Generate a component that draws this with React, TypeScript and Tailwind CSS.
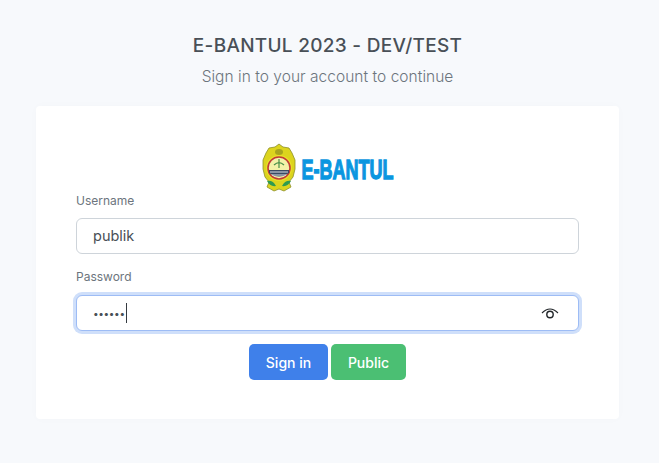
export default function App() {
  return (
    <div className="h-[463px] w-[659px] overflow-hidden bg-[#f7f9fc] font-['Inter','Noto_Sans',sans-serif]">
      <div className="flex w-[655px] flex-col items-center pt-[34px]">
        <h1 className="h-[24px] text-[19px] leading-[24px] font-[450] tracking-[0.28px] text-[#495057]">E-BANTUL 2023 - DEV/TEST</h1>
        <p className="mt-[7px] h-[24px] text-[15.5px] leading-[24px] font-light tracking-[0.03px] text-[#6c757d]">Sign in to your account to continue</p>
      </div>
      <div className="mx-[36px] mt-[17px] h-[313px] w-[583px] rounded-[4px] bg-white px-[40px] pt-[37px] shadow-[0_0_10px_rgba(33,37,41,0.02)]">
        <div className="flex h-[49px] items-center justify-center gap-[5px] pl-[2px]">
          <svg width="34" height="49" viewBox="0 0 34 49">
            <path d="M17 1 L21 4 L27 5 L30 10 L33 17 L33 26 L31 34 L27 39 L29 44 L22 48 L17 46 L12 48 L5 44 L7 39 L3 34 L1 26 L1 17 L4 10 L7 5 L13 4 Z" fill="#dcd41e" stroke="#8d8f2a" strokeWidth="0.8" />
            <ellipse cx="17" cy="9" rx="4" ry="3" fill="#a8a51e" />
            <circle cx="17" cy="25" r="13" fill="#e8e02a" />
            <circle cx="17" cy="25" r="11" fill="#f4f2a8" stroke="#c23a36" strokeWidth="1.6" />
            <path d="M17 16 V25 M12 22 Q17 17 22 22" stroke="#4a8f4a" strokeWidth="1.2" fill="none" />
            <path d="M7 27 H27 V30 Q17 37 7 30 Z" fill="#3a4a63" />
            <path d="M8 29 H26 M10 32 H24" stroke="#d8dde6" strokeWidth="1" />
            <path d="M5 38 Q11 37 14 43 Q8 44 5 38 Z M29 38 Q23 37 20 43 Q26 44 29 38 Z" fill="#2f9b50" />
          </svg>
          <svg width="95" height="28" viewBox="0 0 95 28" className="overflow-visible">
            <text x="0.5" y="16.9" transform="scale(1,1.45)" textLength="92" lengthAdjust="spacingAndGlyphs" fontFamily="'Liberation Sans',sans-serif" fontWeight="700" fontSize="19" fill="#0a96e0" stroke="#0a96e0" strokeWidth="0.9">E-BANTUL</text>
          </svg>
        </div>
        <label className="block h-[18px] text-[12px] leading-[18px] text-[#6c757d]">Username</label>
        <div className="mt-[8px] flex h-[36px] items-center rounded-[6px] border border-[#ced4da] bg-white pl-[16px] text-[14.5px] text-[#495057]">publik</div>
        <label className="mt-[14px] block h-[18px] text-[12px] leading-[18px] text-[#6c757d]">Password</label>
        <div className="mt-[9px] flex h-[36px] items-center justify-between rounded-[6px] border border-[#9dbcf5] bg-white pr-[19px] pl-[16px] text-[#495057] shadow-[0_0_0_3px_#cfdffa]">
          <div className="flex items-center">
            <span className="text-[10px] leading-none tracking-[-0.35px]">••••••</span>
            <span className="ml-[1px] h-[20px] w-px bg-[#343a40]" />
          </div>
          <svg width="18" height="12" viewBox="0 0 18 12" fill="none" stroke="#212529" strokeWidth="1.1">
            <path d="M1 6 Q9 -2 17 6" />
            <circle cx="9" cy="7.5" r="3.2" strokeWidth="1.4" />
          </svg>
        </div>
        <div className="mt-[13px] flex justify-center gap-[3px]">
          <button className="h-[36px] w-[79px] rounded-[5px] bg-[#3f80ea] text-[14px] font-[450] text-white">Sign in</button>
          <button className="h-[36px] w-[75px] rounded-[5px] bg-[#4bbf73] text-[14px] font-[450] text-white">Public</button>
        </div>
      </div>
    </div>
  );
}
